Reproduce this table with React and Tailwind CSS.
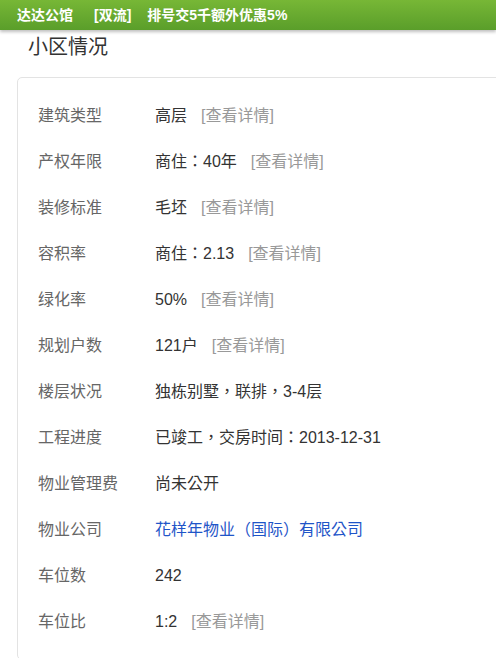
import React from 'react';

const rows = [
  { label: '建筑类型', value: '高层', more: true },
  { label: '产权年限', value: '商住：40年', more: true },
  { label: '装修标准', value: '毛坯', more: true },
  { label: '容积率', value: '商住：2.13', more: true },
  { label: '绿化率', value: '50%', more: true },
  { label: '规划户数', value: '121户', more: true },
  { label: '楼层状况', value: '独栋别墅，联排，3-4层' },
  { label: '工程进度', value: '已竣工，交房时间：2013-12-31' },
  { label: '物业管理费', value: '尚未公开' },
  { label: '物业公司', value: '花样年物业（国际）有限公司', link: true },
  { label: '车位数', value: '242' },
  { label: '车位比', value: '1:2', more: true },
];

// centred full-width punctuation, like the reference's system font
const valueFont = { fontFamily: '"Liberation Sans", "Noto Sans CJK TC", sans-serif' };

function Header() {
  return (
    <header className="h-[30px] flex items-center px-[17px] gap-[13px] text-white text-[14px] font-bold bg-gradient-to-b from-[#77b736] to-[#5a9e2a] shadow-[0_2px_3px_rgba(0,0,0,0.25)] relative z-10">
      <span>达达公馆</span>
      <span className="ml-[8px]">[双流]</span>
      <span className="ml-[3px]">排号交5千额外优惠5%</span>
    </header>
  );
}

function InfoRow({ row }) {
  return (
    <div className="flex items-center h-[46px] text-[16px]">
      <span className="w-[117px] shrink-0 text-[#666]">{row.label}</span>
      <span className={row.link ? 'text-[#1f55c8]' : 'text-[#333]'} style={valueFont}>
        {row.value}
      </span>
      {row.more && <span className="ml-[14px] text-[#999]">[查看详情]</span>}
    </div>
  );
}

export default function App() {
  return (
    <div
      className="w-[496px] h-[658px] overflow-hidden bg-white"
      style={{ fontFamily: '"Liberation Sans", "Noto Sans CJK SC", sans-serif' }}
    >
      <Header />
      <h2 className="mt-[3px] ml-[28px] text-[20px] leading-[28px] text-[#333] font-normal">小区情况</h2>
      <section className="mt-[16px] ml-[17px] w-[520px] border border-[#e3e3e3] rounded-[5px] pl-[20px] pt-[15px] pb-[14px]">
        {rows.map((row) => (
          <InfoRow key={row.label} row={row} />
        ))}
      </section>
    </div>
  );
}
